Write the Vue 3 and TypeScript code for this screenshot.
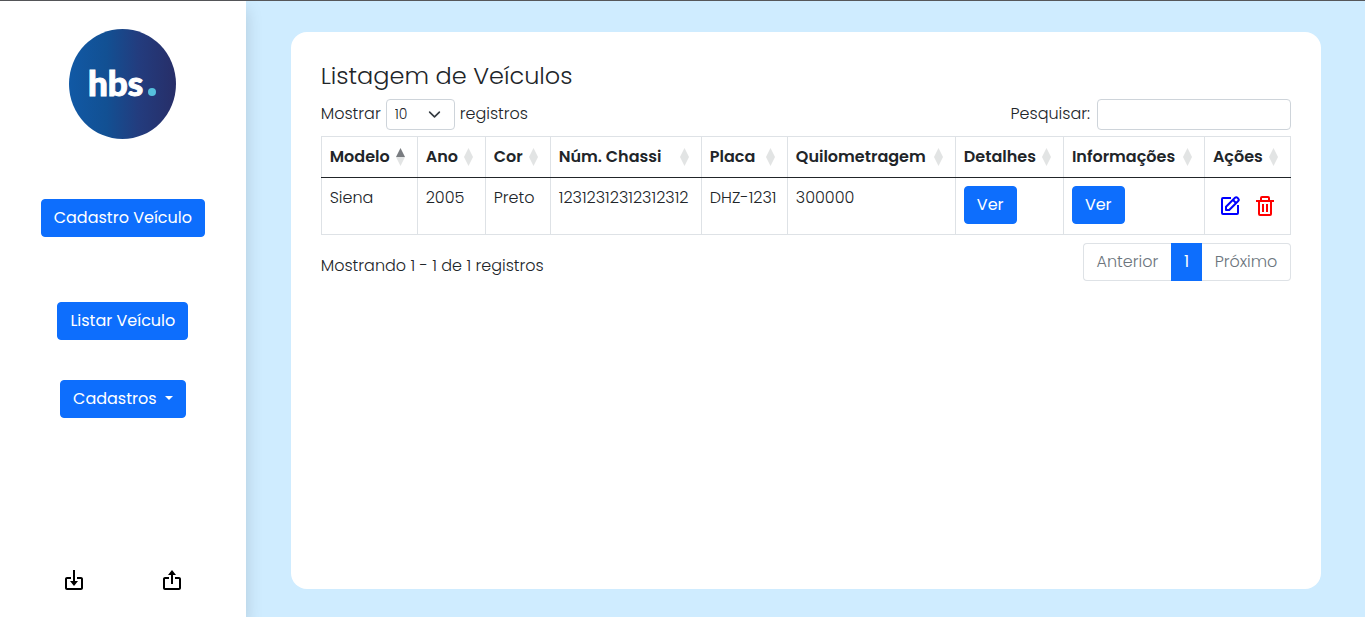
<script setup lang="ts">
import { ref } from 'vue'

interface Column {
  key: string
  label: string
}

interface Vehicle {
  modelo: string
  ano: string
  cor: string
  chassi: string
  placa: string
  km: string
}

const columns: Column[] = [
  { key: 'modelo', label: 'Modelo' },
  { key: 'ano', label: 'Ano' },
  { key: 'cor', label: 'Cor' },
  { key: 'chassi', label: 'Núm. Chassi' },
  { key: 'placa', label: 'Placa' },
  { key: 'km', label: 'Quilometragem' },
  { key: 'detalhes', label: 'Detalhes' },
  { key: 'informacoes', label: 'Informações' },
  { key: 'acoes', label: 'Ações' },
]

const vehicles: Vehicle[] = [
  { modelo: 'Siena', ano: '2005', cor: 'Preto', chassi: '12312312312312312', placa: 'DHZ-1231', km: '300000' },
]

const sortKey = ref('modelo')
const pageSize = ref('10')
const search = ref('')
</script>

<template>
  <div class="app">
    <aside class="sidebar">
      <svg class="logo" viewBox="0 0 107 110" role="img" aria-label="hbs.">
        <defs>
          <linearGradient id="logo-fill" x1="0" x2="1" y1="0" y2="0">
            <stop offset="0" stop-color="#1159a5" />
            <stop offset="0.35" stop-color="#125093" />
            <stop offset="0.65" stop-color="#233c7e" />
            <stop offset="1" stop-color="#272e68" />
          </linearGradient>
        </defs>
        <ellipse cx="53.5" cy="55" rx="53.5" ry="55" fill="url(#logo-fill)" />
        <text class="logo-text" x="19" y="67">hbs</text>
        <circle cx="83" cy="63" r="4" fill="#55c0dc" />
      </svg>
      <nav class="menu">
        <button type="button" class="btn menu-register">Cadastro Veículo</button>
        <button type="button" class="btn menu-list">Listar Veículo</button>
        <button type="button" class="btn menu-more">Cadastros<span class="caret"></span></button>
      </nav>
      <div class="transfer">
        <button type="button" class="icon-btn" aria-label="Importar">
          <svg viewBox="0 0 24 24" fill="currentColor">
            <path d="m12 18 4-5h-3V2h-2v11H8z" />
            <path d="M19 9h-4v2h4v9H5v-9h4V9H5c-1.103 0-2 .897-2 2v9c0 1.103.897 2 2 2h14c1.103 0 2-.897 2-2v-9c0-1.103-.897-2-2-2z" />
          </svg>
        </button>
        <button type="button" class="icon-btn" aria-label="Exportar">
          <svg viewBox="0 0 24 24" fill="currentColor">
            <path d="M11 16h2V7h3l-4-5-4 5h3z" />
            <path d="M5 22h14c1.103 0 2-.897 2-2v-9c0-1.103-.897-2-2-2h-4v2h4v9H5v-9h4V9H5c-1.103 0-2 .897-2 2v9c0 1.103.897 2 2 2z" />
          </svg>
        </button>
      </div>
    </aside>

    <main class="main">
      <section class="card">
        <h1 class="title">Listagem de Veículos</h1>
        <div class="toolbar">
          <label class="field">
            Mostrar
            <span class="select-wrap">
              <select v-model="pageSize" class="select">
                <option>10</option>
                <option>25</option>
                <option>50</option>
                <option>100</option>
              </select>
              <svg class="chevron" viewBox="0 0 16 16" fill="none" stroke="#343a40" stroke-width="2" stroke-linecap="round" stroke-linejoin="round">
                <path d="m2 5 6 6 6-6" />
              </svg>
            </span>
            registros
          </label>
          <label class="field search-field">
            Pesquisar:
            <input v-model="search" type="search" class="search" />
          </label>
        </div>

        <table class="table">
          <colgroup>
            <col v-for="c in columns" :key="c.key" :class="`col-${c.key}`" />
          </colgroup>
          <thead>
            <tr>
              <th v-for="c in columns" :key="c.key" scope="col" @click="sortKey = c.key">
                <div class="head">
                  <span>{{ c.label }}</span>
                  <svg class="sort" viewBox="0 0 9 18">
                    <path d="M4.5 0 9 9H0z" :class="{ active: sortKey === c.key }" />
                    <path d="M0 9h9l-4.5 9z" />
                  </svg>
                </div>
              </th>
            </tr>
          </thead>
          <tbody>
            <tr v-for="v in vehicles" :key="v.chassi">
              <td>{{ v.modelo }}</td>
              <td>{{ v.ano }}</td>
              <td>{{ v.cor }}</td>
              <td>{{ v.chassi }}</td>
              <td>{{ v.placa }}</td>
              <td>{{ v.km }}</td>
              <td><button type="button" class="btn view">Ver</button></td>
              <td><button type="button" class="btn view">Ver</button></td>
              <td>
                <div class="actions">
                  <button type="button" class="icon-btn edit" aria-label="Editar">
                    <svg viewBox="0 0 24 24" fill="none" stroke="currentColor" stroke-width="2">
                      <path d="M13 4H5a1 1 0 0 0-1 1v14a1 1 0 0 0 1 1h14a1 1 0 0 0 1-1v-8" />
                      <path d="M8 16v-3.2L17 3.8a1.7 1.7 0 0 1 2.4 0l.8.8a1.7 1.7 0 0 1 0 2.4L11.2 16z" stroke-linejoin="round" />
                      <path d="m15 6 3 3" />
                    </svg>
                  </button>
                  <button type="button" class="icon-btn remove" aria-label="Excluir">
                    <svg viewBox="0 0 24 24" fill="currentColor">
                      <path d="M5 20a2 2 0 0 0 2 2h10a2 2 0 0 0 2-2V8h2V6h-4V4a2 2 0 0 0-2-2H9a2 2 0 0 0-2 2v2H3v2h2zM9 4h6v2H9zM8 8h9v12H7V8z" />
                      <path d="M9 10h2v8H9zm4 0h2v8h-2z" />
                    </svg>
                  </button>
                </div>
              </td>
            </tr>
          </tbody>
        </table>

        <div class="footer">
          <p class="info">Mostrando 1 - 1 de 1 registros</p>
          <nav class="pages" aria-label="Paginação">
            <button type="button" class="page">Anterior</button>
            <button type="button" class="page current" aria-current="page">1</button>
            <button type="button" class="page">Próximo</button>
          </nav>
        </div>
      </section>
    </main>
  </div>
</template>

<style>
body {
  margin: 0;
}
</style>

<style scoped>
.app,
.app * {
  box-sizing: border-box;
}

.app {
  display: flex;
  min-height: 100vh;
  border-top: 1px solid #56575a;
  background: #cfecff;
  color: #212529;
  font-family: Poppins, Inter, "Open Sans", sans-serif;
  font-size: 16px;
  font-weight: 300;
  line-height: 24px;
}

button,
select,
input {
  font: inherit;
  margin: 0;
}

.sidebar {
  display: flex;
  flex: 0 0 18%;
  flex-direction: column;
  align-items: center;
  padding: 28px 0 25px;
  background: #fff;
  box-shadow: 0 8px 16px rgba(0, 0, 0, 0.15);
}

.logo {
  width: 107px;
  height: 110px;
}

.logo-text {
  fill: #fff;
  stroke: #fff;
  stroke-width: 1px;
  font-family: Lato, sans-serif;
  font-size: 35px;
  font-weight: 900;
}

.menu {
  display: flex;
  flex-direction: column;
  align-items: center;
  margin-top: 60px;
}

.btn {
  height: 38px;
  padding: 0 12px;
  border: 1px solid #0d6efd;
  border-radius: 4px;
  background: #0d6efd;
  color: #fff;
  font-weight: 400;
  white-space: nowrap;
  cursor: pointer;
}

.menu-register {
  min-width: 164px;
}

.menu-list {
  min-width: 131px;
  margin-top: 65px;
}

.menu-more {
  min-width: 126px;
  margin-top: 40px;
}

.caret {
  display: inline-block;
  margin-left: 8px;
  vertical-align: 4px;
  border: 4px solid transparent;
  border-top-color: #fff;
  border-bottom: 0;
}

.transfer {
  display: flex;
  justify-content: space-around;
  width: 100%;
  margin-top: auto;
  padding: 0 25px;
}

.icon-btn {
  display: block;
  width: 24px;
  height: 24px;
  padding: 0;
  border: 0;
  background: none;
  color: #000;
  cursor: pointer;
}

.icon-btn svg {
  display: block;
  width: 100%;
  height: 100%;
}

.main {
  display: flex;
  flex: 1;
  min-width: 0;
  padding: 31px 44px 28px 45px;
}

.card {
  flex: 1;
  min-width: 0;
  padding: 30px;
  border-radius: 16px;
  background: #fff;
}

.title {
  margin: 0 0 10px;
  font-size: 24px;
  font-weight: 300;
  line-height: 27px;
}

.toolbar {
  display: flex;
  justify-content: space-between;
  margin-bottom: 6px;
}

.field {
  display: flex;
  align-items: flex-start;
  gap: 5px;
  line-height: 29px;
}

.search-field {
  gap: 7px;
}

.select-wrap {
  position: relative;
  display: block;
}

.select {
  display: block;
  width: 69px;
  height: 31px;
  padding: 0 8px;
  border: 1px solid #ced4da;
  border-radius: 4px;
  appearance: none;
  background: #fff;
  color: #212529;
  font-size: 14px;
}

.chevron {
  position: absolute;
  top: 9px;
  right: 14px;
  width: 13px;
  height: 13px;
  pointer-events: none;
}

.search {
  width: 194px;
  height: 31px;
  padding: 0 8px;
  border: 1px solid #ced4da;
  border-radius: 4px;
  background: #fff;
  font-size: 14px;
}

.table {
  width: 100%;
  border-collapse: collapse;
  table-layout: fixed;
}

.col-modelo {
  width: 96px;
}

.col-ano {
  width: 68px;
}

.col-cor {
  width: 65px;
}

.col-chassi {
  width: 151px;
}

.col-placa {
  width: 86px;
}

.col-km {
  width: 168px;
}

.col-detalhes {
  width: 108px;
}

.col-informacoes {
  width: 141px;
}

.col-acoes {
  width: 86px;
}

th,
td {
  padding: 8px;
  border: 1px solid #dee2e6;
  text-align: left;
  vertical-align: top;
  white-space: nowrap;
}

th {
  border-bottom-color: #212529;
  font-weight: 600;
  cursor: pointer;
}

.head {
  display: flex;
  align-items: center;
  justify-content: space-between;
  margin-right: 4px;
}

.sort {
  flex: none;
  width: 9px;
  height: 18px;
  fill: #e2e4e4;
}

.sort .active {
  fill: #797c80;
}

tbody td {
  height: 57px;
}

.view {
  display: block;
  min-width: 52px;
}

.actions {
  display: flex;
  gap: 11px;
  padding: 8px 5px;
}

.edit {
  color: #00f;
}

.remove {
  color: #f00;
}

.footer {
  display: flex;
  justify-content: space-between;
  margin-top: 8px;
}

.info {
  margin: 0;
  padding-top: 11px;
}

.pages {
  display: flex;
}

.page {
  height: 38px;
  padding: 0 12px;
  border: 1px solid #dee2e6;
  background: #fff;
  color: #6c757d;
  cursor: pointer;
}

.page:first-child {
  min-width: 88px;
  border-right: 0;
  border-radius: 4px 0 0 4px;
}

.page:last-child {
  min-width: 89px;
  border-left: 0;
  border-radius: 0 4px 4px 0;
}

.page.current {
  min-width: 31px;
  border-color: #0d6efd;
  background: #0d6efd;
  color: #fff;
  font-weight: 400;
}
</style>
